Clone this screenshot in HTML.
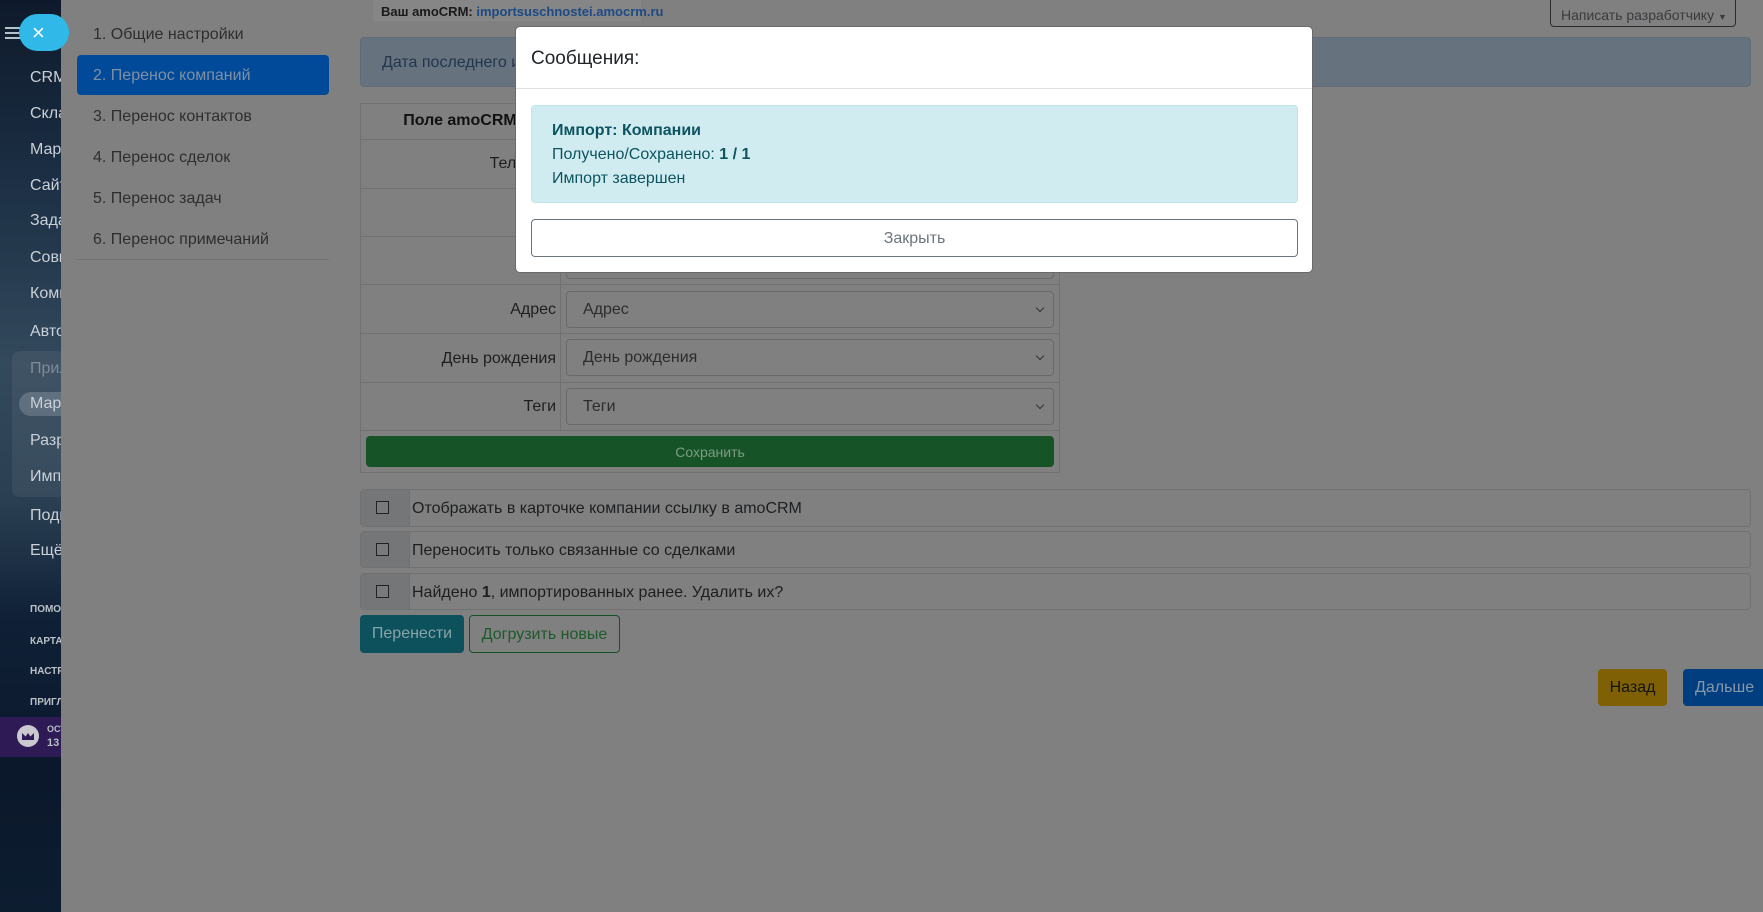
<!DOCTYPE html>
<html><head><meta charset="utf-8">
<style>
*{box-sizing:border-box;margin:0;padding:0}
body{width:1763px;height:912px;overflow:hidden;position:relative;background:#808080;font-family:"Liberation Sans",sans-serif;}
.a{position:absolute}
#side{left:0;top:0;width:62px;height:912px;background:linear-gradient(180deg,#0e1a2b 0%,#1c2f44 20%,#33495c 40%,#2a3f52 55%,#0f2036 68%,#0b182b 85%,#0d1d30 100%);overflow:hidden}
.st{position:absolute;left:30px;color:#c9d0d8;font-size:16px;white-space:nowrap}
.sm{position:absolute;left:30px;color:#b9c0c8;font-size:10px;font-weight:bold;white-space:nowrap}
#panel{left:61px;top:0;width:1702px;height:912px;background:#808080}
.nav{position:absolute;left:93px;font-size:16px;color:#2e2e2e;white-space:nowrap}
.sel{position:absolute;left:566px;width:488px;height:37px;border:1px solid #67696b;border-radius:4px;font-size:16px;color:#2b2c2e;padding:9px 0 0 16px}
.sel:after{content:"";position:absolute;right:10px;top:13px;width:5px;height:5px;border-right:1.5px solid #333;border-bottom:1.5px solid #333;transform:rotate(45deg)}
.lbl{position:absolute;width:190px;left:366px;text-align:right;font-size:16px;color:#1c1e20}
.cb{position:absolute;left:360px;width:1391px;border:1px solid #6f7173;border-radius:4px;font-size:16px;color:#1c1e20}
.cb .ad{position:absolute;left:0;top:0;bottom:0;width:49px;background:#757678;border-right:1px solid #6f7173}
.cb .ad i{position:absolute;left:15px;top:11px;width:13px;height:13px;border:1px solid #222;background:#7a7a7a}
.cb span{position:absolute;left:51px;top:10px;white-space:nowrap}
</style></head><body>
<div id="side" class="a">
  <div class="a" style="left:5px;top:27px;width:15px;height:2px;background:#b8c2cc;box-shadow:0 5px 0 #b8c2cc,0 10px 0 #b8c2cc"></div>
  <div class="st" style="top:69px">CRM</div>
  <div class="st" style="top:105px">Склад</div>
  <div class="st" style="top:141px">Маркетинг</div>
  <div class="st" style="top:177px">Сайты</div>
  <div class="st" style="top:212px">Задачи</div>
  <div class="st" style="top:249px">Совместная</div>
  <div class="st" style="top:285px">Компания</div>
  <div class="st" style="top:323px">Автоматизация</div>
  <div class="a" style="left:12px;top:351px;width:70px;height:146px;background:rgba(255,255,255,0.06);border-radius:8px"></div>
  <div class="st" style="top:360px;color:#7f8b97">Приложения</div>
  <div class="a" style="left:19px;top:392px;width:60px;height:24px;background:rgba(255,255,255,0.18);border-radius:12px"></div>
  <div class="st" style="top:395px">Маркет</div>
  <div class="st" style="top:432px">Разработчикам</div>
  <div class="st" style="top:468px">Импорт</div>
  <div class="st" style="top:507px">Подписка</div>
  <div class="st" style="top:542px">Ещё</div>
  <div class="sm" style="top:604px">ПОМОЩЬ</div>
  <div class="sm" style="top:636px">КАРТА</div>
  <div class="sm" style="top:666px">НАСТРОЙКИ</div>
  <div class="sm" style="top:697px">ПРИГЛАСИТЬ</div>
  <div class="a" style="left:0;top:717px;width:62px;height:40px;background:#2e1a55"></div>
  <div class="a" style="left:17px;top:725px;width:22px;height:22px;border-radius:50%;background:#c9c9d0"></div>
  <div class="a" style="left:22px;top:733px;width:12px;height:7px;background:#2e1a55;clip-path:polygon(0 100%,0 0,30% 50%,50% 0,70% 50%,100% 0,100% 100%)"></div>
  <div class="sm" style="left:47px;top:724px;font-size:9px">ОСТ</div>
  <div class="sm" style="left:47px;top:737px;font-size:11px">13 Д</div>
</div>
<div class="a" style="left:19px;top:14px;width:50px;height:37px;border-radius:19px;background:#2fb8e8;z-index:1"></div>
<div class="a" style="left:32px;top:20px;color:#fff;font-size:22px;z-index:2">×</div>

<div id="panel" class="a"></div>
<div class="nav" style="top:26px">1. Общие настройки</div>
<div class="a" style="left:77px;top:55px;width:252px;height:40px;background:#004a99;border-radius:4px"></div>
<div class="nav" style="top:67px;color:#7f8fa3">2. Перенос компаний</div>
<div class="nav" style="top:108px">3. Перенос контактов</div>
<div class="nav" style="top:149px">4. Перенос сделок</div>
<div class="nav" style="top:190px">5. Перенос задач</div>
<div class="nav" style="top:231px">6. Перенос примечаний</div>
<div class="a" style="left:77px;top:259px;width:252px;height:1px;background:#6f7173"></div>

<div class="a" style="left:373px;top:0;width:268px;height:21px;background:#868686"></div>
<div class="a" style="left:381px;top:4px;font-size:13px;font-weight:bold;color:#1a1a1a;white-space:nowrap">Ваш amoCRM: <span style="color:#1c4a85">importsuschnostei.amocrm.ru</span></div>
<div class="a" style="left:1550px;top:-6px;width:186px;height:33px;border:1px solid #2a2d30;border-radius:4px;font-size:14px;color:#383b3e;padding:12px 0 0 10px;white-space:nowrap">Написать разработчику <span style="font-size:9px">▼</span></div>
<div class="a" style="left:360px;top:37px;width:1391px;height:50px;background:#66737f;border:1px solid #5f6c79;border-radius:4px;font-size:16px;color:#22354d;padding:16px 0 0 21px;white-space:nowrap">Дата последнего импорта</div>

<div class="a" style="left:360px;top:103px;width:700px;height:370px;border:1px solid #6f7173"></div>
<div class="a" style="left:360px;top:139px;width:700px;height:1px;background:#6f7173"></div>
<div class="a" style="left:360px;top:188px;width:700px;height:1px;background:#6f7173"></div>
<div class="a" style="left:360px;top:236px;width:700px;height:1px;background:#6f7173"></div>
<div class="a" style="left:360px;top:284px;width:700px;height:1px;background:#6f7173"></div>
<div class="a" style="left:360px;top:333px;width:700px;height:1px;background:#6f7173"></div>
<div class="a" style="left:360px;top:382px;width:700px;height:1px;background:#6f7173"></div>
<div class="a" style="left:360px;top:430px;width:700px;height:1px;background:#6f7173"></div>
<div class="a" style="left:560px;top:103px;width:1px;height:327px;background:#6f7173"></div>
<div class="a" style="left:360px;top:112px;width:200px;text-align:center;font-size:16px;font-weight:bold;color:#111">Поле amoCRM</div>
<div class="a" style="left:560px;top:112px;width:500px;text-align:center;font-size:16px;font-weight:bold;color:#111">Поле Битрикс24</div>
<div class="lbl" style="top:155px">Телефон</div>
<div class="sel" style="top:145px">Телефон</div>
<div class="sel" style="top:194px">Email</div>
<div class="sel" style="top:242px">Сайт</div>
<div class="lbl" style="top:301px">Адрес</div>
<div class="sel" style="top:291px">Адрес</div>
<div class="lbl" style="top:350px">День рождения</div>
<div class="sel" style="top:339px">День рождения</div>
<div class="lbl" style="top:398px">Теги</div>
<div class="sel" style="top:388px">Теги</div>
<div class="a" style="left:366px;top:436px;width:688px;height:31px;background:#165427;border-radius:4px;color:#7f9a85;font-size:14px;text-align:center;padding-top:8px">Сохранить</div>

<div class="cb" style="top:489px;height:38px"><div class="ad"><i></i></div><span>Отображать в карточке компании ссылку в amoCRM</span></div>
<div class="cb" style="top:531px;height:37px"><div class="ad"><i></i></div><span>Переносить только связанные со сделками</span></div>
<div class="cb" style="top:573px;height:37px"><div class="ad"><i></i></div><span>Найдено <b>1</b>, импортированных ранее. Удалить их?</span></div>
<div class="a" style="left:360px;top:615px;width:104px;height:38px;background:#0c515c;border-radius:4px;color:#8aa3a8;font-size:16px;text-align:center;padding-top:10px">Перенести</div>
<div class="a" style="left:469px;top:615px;width:151px;height:38px;border:1px solid #145323;border-radius:4px;color:#1d5a2b;font-size:16px;text-align:center;padding-top:10px">Догрузить новые</div>
<div class="a" style="left:1598px;top:669px;width:69px;height:37px;background:#7f6004;border-radius:4px;color:#141414;font-size:16px;text-align:center;padding-top:10px">Назад</div>
<div class="a" style="left:1683px;top:669px;width:90px;height:37px;background:#003e80;border-radius:4px;color:#8797aa;font-size:16px;padding:10px 0 0 12px">Дальше</div>

<div class="a" style="left:515px;top:26px;width:798px;height:247px;background:#fff;border-radius:5px;border:1px solid #6a6a6a">
  <div class="a" style="left:15px;top:21px;font-size:19px;color:#212529">Сообщения:</div>
  <div class="a" style="left:0;top:61px;width:796px;height:1px;background:#dee2e6"></div>
  <div class="a" style="left:15px;top:78px;width:767px;height:98px;background:#d1ecf1;border:1px solid #bee5eb;border-radius:4px;color:#0c5460;font-size:16px;line-height:24px;padding:13px 0 0 20px">
    <b>Импорт: Компании</b><br>Получено/Сохранено: <b>1 / 1</b><br>Импорт завершен
  </div>
  <div class="a" style="left:15px;top:192px;width:767px;height:38px;border:1px solid #6c757d;border-radius:4px;color:#6c757d;font-size:16px;text-align:center;padding-top:10px">Закрыть</div>
</div>
</body></html>
